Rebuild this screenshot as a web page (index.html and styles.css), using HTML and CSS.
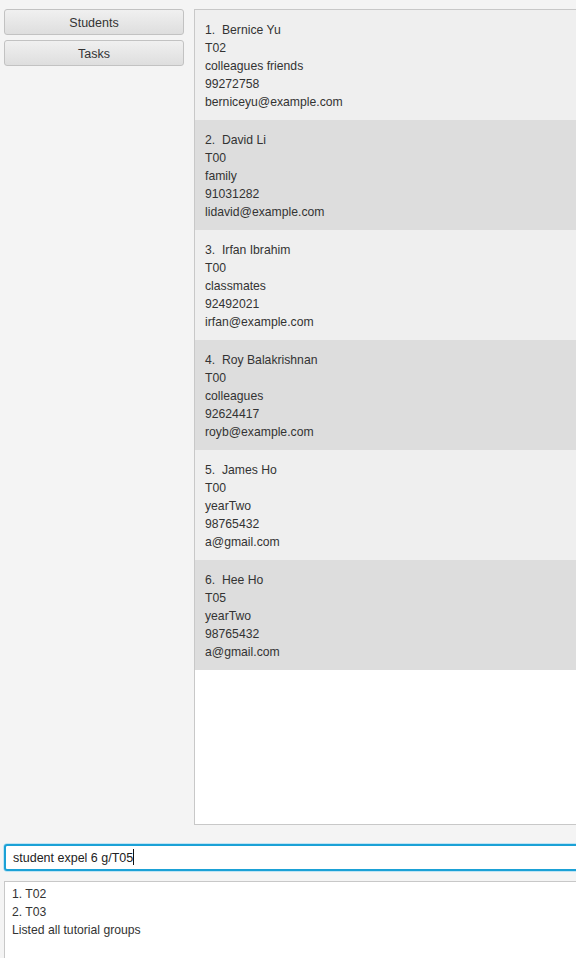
FILE: index.html
```html
<!DOCTYPE html>
<html>
<head>
<meta charset="utf-8">
<link rel="stylesheet" href="styles.css">
</head>
<body>
<div class="app">
  <div class="top">
    <div class="sidebar">
      <button class="nav-btn">Students</button>
      <button class="nav-btn">Tasks</button>
    </div>
    <div class="list">
      <div class="cell odd">
        <div>1. &nbsp;Bernice Yu</div>
        <div>T02</div>
        <div>colleagues friends</div>
        <div>99272758</div>
        <div>berniceyu@example.com</div>
      </div>
      <div class="cell even">
        <div>2. &nbsp;David Li</div>
        <div>T00</div>
        <div>family</div>
        <div>91031282</div>
        <div>lidavid@example.com</div>
      </div>
      <div class="cell odd">
        <div>3. &nbsp;Irfan Ibrahim</div>
        <div>T00</div>
        <div>classmates</div>
        <div>92492021</div>
        <div>irfan@example.com</div>
      </div>
      <div class="cell even">
        <div>4. &nbsp;Roy Balakrishnan</div>
        <div>T00</div>
        <div>colleagues</div>
        <div>92624417</div>
        <div>royb@example.com</div>
      </div>
      <div class="cell odd">
        <div>5. &nbsp;James Ho</div>
        <div>T00</div>
        <div>yearTwo</div>
        <div>98765432</div>
        <div>a@gmail.com</div>
      </div>
      <div class="cell even">
        <div>6. &nbsp;Hee Ho</div>
        <div>T05</div>
        <div>yearTwo</div>
        <div>98765432</div>
        <div>a@gmail.com</div>
      </div>
    </div>
  </div>
  <div class="command">student expel 6 g/T05<span class="caret"></span></div>
  <div class="result">
    <div>1. T02</div>
    <div>2. T03</div>
    <div>Listed all tutorial groups</div>
  </div>
</div>
</body>
</html>
```
FILE: styles.css
```css
html, body {
  margin: 0;
  padding: 0;
  overflow: hidden;
  background: #f4f4f4;
}
body {
  width: 576px;
  height: 958px;
  font-family: "Liberation Sans", Arial, sans-serif;
  font-size: 12.2px;
  color: #333333;
}
.app {
  width: 576px;
}
.top {
  display: flex;
  gap: 10px;
  padding: 9px 0 0 4px;
}
.sidebar {
  display: flex;
  flex-direction: column;
  gap: 5px;
  width: 180px;
  flex: none;
}
.nav-btn {
  height: 26px;
  box-sizing: border-box;
  border: 1px solid #c2c2c2;
  border-radius: 3px;
  background: linear-gradient(#f0f0f0, #dedede);
  font-family: "Liberation Sans", Arial, sans-serif;
  font-size: 12.5px;
  color: #333333;
  padding: 2px 0 0;
}
.list {
  flex: 1;
  height: 814px;
  border: 1px solid #c8c8c8;
  border-right: none;
  background: #ffffff;
}
.cell {
  height: 90px;
  padding: 11px 10px 9px;
  line-height: 18px;
}
.odd { background: #efefef; }
.even { background: #dddddd; }
.command {
  margin: 19px 0 0 4px;
  height: 23px;
  line-height: 25px;
  border: 2px solid #1ba1d6;
  border-right: none;
  border-radius: 3px 0 0 3px;
  background: #ffffff;
  box-shadow: -1px 0 0 0 #bfe4f4, 0 -1px 0 0 #bfe4f4, 0 1px 0 0 #bfe4f4;
  padding-left: 7px;
  font-size: 12.5px;
  color: #222222;
}
.caret {
  display: inline-block;
  width: 1px;
  height: 16px;
  background: #111;
  vertical-align: -3px;
}
.result {
  margin: 10px 0 0 4px;
  height: 100px;
  border: 1px solid #c8c8c8;
  border-right: none;
  background: #ffffff;
  padding: 3px 0 0 7px;
  line-height: 18px;
}
```
